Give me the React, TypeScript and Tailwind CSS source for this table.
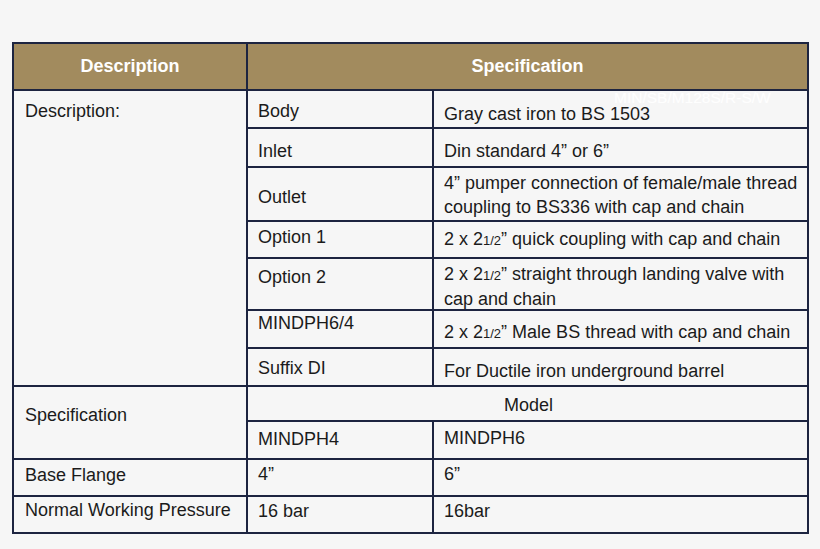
const Half = () => <span className="text-[13px]">1/2</span>

function Cell({ children, className = "" }: { children?: React.ReactNode; className?: string }) {
  return <div className={`bg-[#f6f6f6] pl-[10px] pr-2 leading-[23.5px] ${className}`}>{children}</div>
}

export default function App() {
  return (
    <div
      className="w-[820px] h-[549px] bg-[#f6f6f6] pt-[42px] pl-[12px] text-[18px] text-[#1b1b1b]"
      style={{ fontFamily: '"Liberation Sans", Arial, sans-serif' }}
    >
      <div className="relative w-[797px]">
        <div className="grid grid-cols-[232px_184px_373px] grid-rows-[45px_36px_37px_52px_35px_50px_36px_36px_33px_36px_35px_35px] gap-[2px] bg-[#1d2440] p-[2px]">
          {/* header */}
          <div className="bg-[#a28b5e] text-white font-bold text-center pt-[11px] leading-[23.5px]">Description</div>
          <div className="col-span-2 bg-[#a28b5e] text-white font-bold text-center pt-[11px] leading-[23.5px]">
            Specification
          </div>

          {/* description block */}
          <Cell className="row-span-7 pl-[11px] pt-[9px]">Description:</Cell>
          <Cell className="pt-[9px]">Body</Cell>
          <Cell className="pt-[12px]">Gray cast iron to BS 1503</Cell>

          <Cell className="pt-[11px]">Inlet</Cell>
          <Cell className="pt-[11px]">Din standard 4” or 6”</Cell>

          <Cell className="pt-[18px]">Outlet</Cell>
          <Cell className="pt-[4px]">
            4” pumper connection of female/male thread coupling to BS336 with cap and chain
          </Cell>

          <Cell className="pt-[4px]">Option 1</Cell>
          <Cell className="pt-[6px]">
            2 x 2<Half />” quick coupling with cap and chain
          </Cell>

          <Cell className="pt-[7px]">Option 2</Cell>
          <Cell className="pt-[4px]">
            2 x 2<Half />” straight through landing valve with cap and chain
          </Cell>

          <Cell className="pt-[1px]">MINDPH6/4</Cell>
          <Cell className="pt-[10px]">
            2 x 2<Half />” Male BS thread with cap and chain
          </Cell>

          <Cell className="pt-[8px]">Suffix DI</Cell>
          <Cell className="pt-[11px]">For Ductile iron underground barrel</Cell>

          {/* specification block */}
          <Cell className="row-span-2 pl-[11px] pt-[17px]">Specification</Cell>
          <Cell className="col-span-2 text-center pl-0 pr-0 pt-[7px]">Model</Cell>
          <Cell className="pt-[6px]">MINDPH4</Cell>
          <Cell className="pt-[5px]">MINDPH6</Cell>

          <Cell className="pl-[11px] pt-[4px]">Base Flange</Cell>
          <Cell className="pt-[3px]">4”</Cell>
          <Cell className="pt-[3px]">6”</Cell>

          <Cell className="pl-[11px] pt-[2px]">Normal Working Pressure</Cell>
          <Cell className="pt-[3px]">16 bar</Cell>
          <Cell className="pt-[3px]">16bar</Cell>
        </div>

        {/* faint watermark */}
        <div className="absolute left-[602px] top-[48px] text-[15.5px] text-white/90 leading-none">MIN/SB/M128S/R-S/W</div>
      </div>
    </div>
  )
}
